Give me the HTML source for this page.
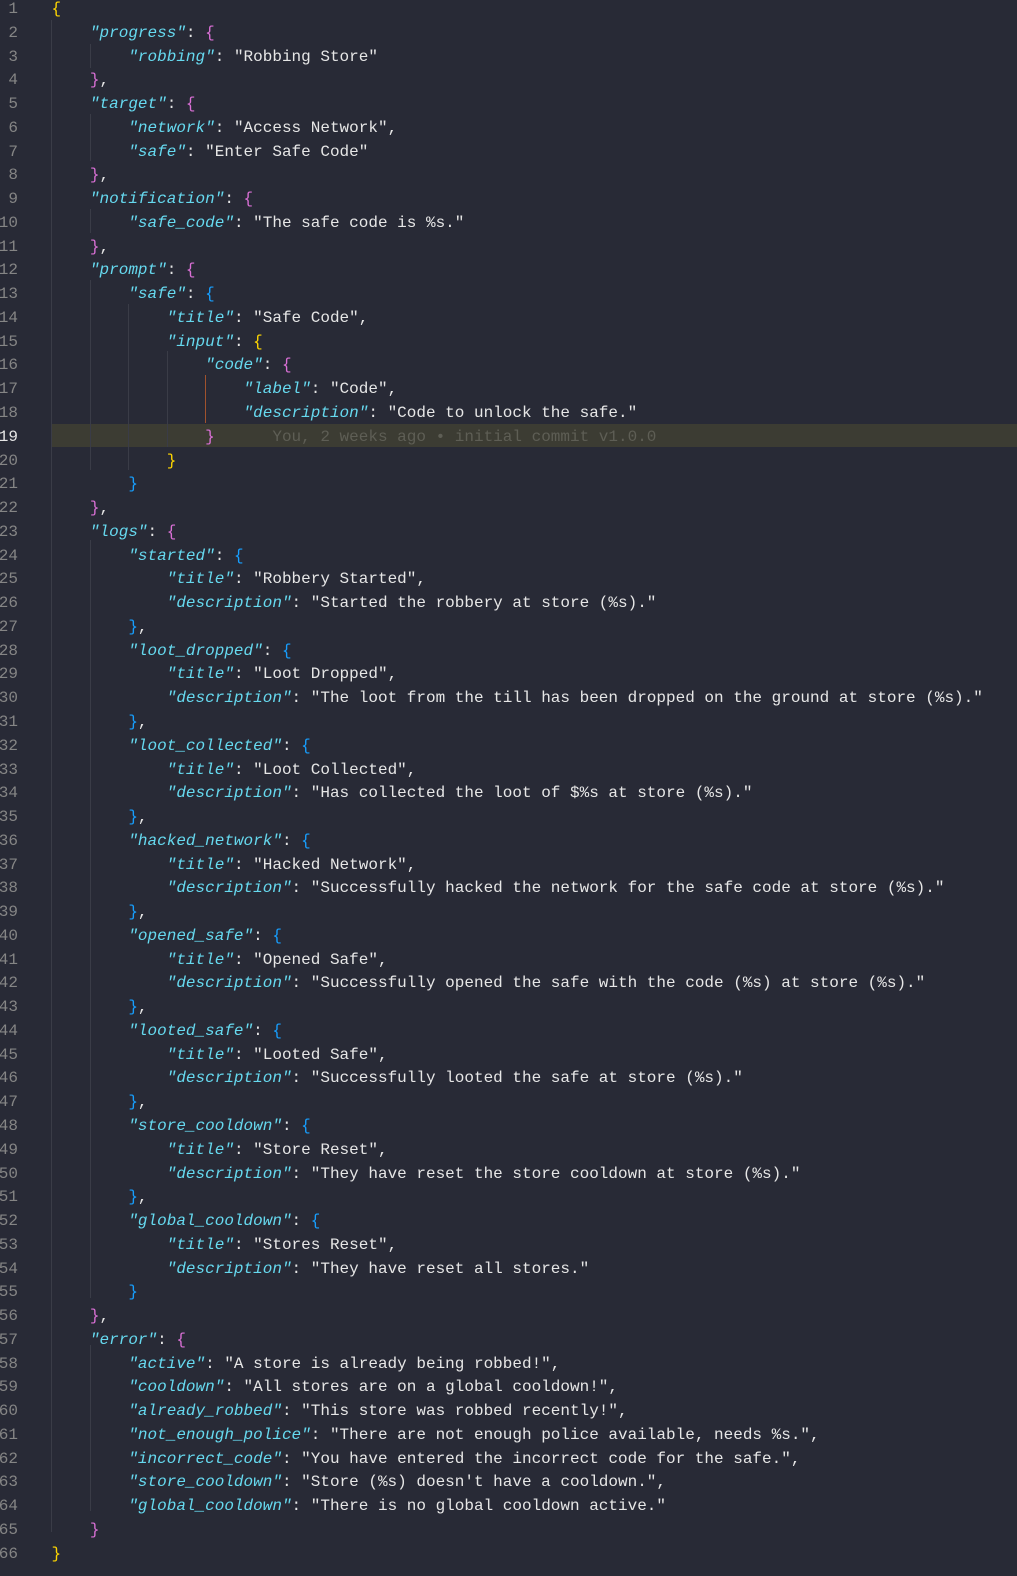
<!DOCTYPE html>
<html><head><meta charset="utf-8"><style>
html,body{margin:0;padding:0;background:#282a36;width:1017px;height:1576px;overflow:hidden}
.ed{position:absolute;left:0;top:-2px;font-family:"Liberation Mono",monospace;font-size:16px;line-height:23.78px;color:#e6e6e6}
.l{position:relative;height:23.78px;white-space:pre}
.n{position:absolute;left:-22px;width:40px;text-align:right;color:#858585}
.c{position:absolute;left:51.5px}
.k{color:#66d9ef;font-style:italic}
.y{color:#ffd700}.p{color:#da70d6}.b{color:#179fff}
.hl .n{color:#e6e6e6}
.blame{color:#5e5e55}
.g{position:absolute;width:1px;background:#3a3c47}
.hlbar{position:absolute;left:51px;top:424px;width:966px;height:23px;background:#3c3c33}
</style></head><body>
<div class="hlbar"></div>
<div class="g" style="left:51px;top:20px;height:1512px"></div>
<div class="g" style="left:90px;top:44px;height:24px"></div>
<div class="g" style="left:90px;top:114px;height:47px"></div>
<div class="g" style="left:90px;top:209px;height:24px"></div>
<div class="g" style="left:90px;top:280px;height:190px"></div>
<div class="g" style="left:128px;top:304px;height:166px"></div>
<div class="g" style="left:167px;top:351px;height:96px"></div>
<div class="g" style="left:205px;top:375px;height:48px;background:#a0522d"></div>
<div class="g" style="left:90px;top:540px;height:758px"></div>
<div class="g" style="left:90px;top:1345px;height:166px"></div>
<div class="ed">
<div class="l"><span class="n">1</span><span class="c"><span class="y">{</span></span></div>
<div class="l"><span class="n">2</span><span class="c">    <span class="k">"progress"</span>: <span class="p">{</span></span></div>
<div class="l"><span class="n">3</span><span class="c">        <span class="k">"robbing"</span>: "Robbing Store"</span></div>
<div class="l"><span class="n">4</span><span class="c">    <span class="p">}</span>,</span></div>
<div class="l"><span class="n">5</span><span class="c">    <span class="k">"target"</span>: <span class="p">{</span></span></div>
<div class="l"><span class="n">6</span><span class="c">        <span class="k">"network"</span>: "Access Network",</span></div>
<div class="l"><span class="n">7</span><span class="c">        <span class="k">"safe"</span>: "Enter Safe Code"</span></div>
<div class="l"><span class="n">8</span><span class="c">    <span class="p">}</span>,</span></div>
<div class="l"><span class="n">9</span><span class="c">    <span class="k">"notification"</span>: <span class="p">{</span></span></div>
<div class="l"><span class="n">10</span><span class="c">        <span class="k">"safe_code"</span>: "The safe code is %s."</span></div>
<div class="l"><span class="n">11</span><span class="c">    <span class="p">}</span>,</span></div>
<div class="l"><span class="n">12</span><span class="c">    <span class="k">"prompt"</span>: <span class="p">{</span></span></div>
<div class="l"><span class="n">13</span><span class="c">        <span class="k">"safe"</span>: <span class="b">{</span></span></div>
<div class="l"><span class="n">14</span><span class="c">            <span class="k">"title"</span>: "Safe Code",</span></div>
<div class="l"><span class="n">15</span><span class="c">            <span class="k">"input"</span>: <span class="y">{</span></span></div>
<div class="l"><span class="n">16</span><span class="c">                <span class="k">"code"</span>: <span class="p">{</span></span></div>
<div class="l"><span class="n">17</span><span class="c">                    <span class="k">"label"</span>: "Code",</span></div>
<div class="l"><span class="n">18</span><span class="c">                    <span class="k">"description"</span>: "Code to unlock the safe."</span></div>
<div class="l hl"><span class="n">19</span><span class="c">                <span class="p">}</span>      <span class="blame">You, 2 weeks ago • initial commit v1.0.0</span></span></div>
<div class="l"><span class="n">20</span><span class="c">            <span class="y">}</span></span></div>
<div class="l"><span class="n">21</span><span class="c">        <span class="b">}</span></span></div>
<div class="l"><span class="n">22</span><span class="c">    <span class="p">}</span>,</span></div>
<div class="l"><span class="n">23</span><span class="c">    <span class="k">"logs"</span>: <span class="p">{</span></span></div>
<div class="l"><span class="n">24</span><span class="c">        <span class="k">"started"</span>: <span class="b">{</span></span></div>
<div class="l"><span class="n">25</span><span class="c">            <span class="k">"title"</span>: "Robbery Started",</span></div>
<div class="l"><span class="n">26</span><span class="c">            <span class="k">"description"</span>: "Started the robbery at store (%s)."</span></div>
<div class="l"><span class="n">27</span><span class="c">        <span class="b">}</span>,</span></div>
<div class="l"><span class="n">28</span><span class="c">        <span class="k">"loot_dropped"</span>: <span class="b">{</span></span></div>
<div class="l"><span class="n">29</span><span class="c">            <span class="k">"title"</span>: "Loot Dropped",</span></div>
<div class="l"><span class="n">30</span><span class="c">            <span class="k">"description"</span>: "The loot from the till has been dropped on the ground at store (%s)."</span></div>
<div class="l"><span class="n">31</span><span class="c">        <span class="b">}</span>,</span></div>
<div class="l"><span class="n">32</span><span class="c">        <span class="k">"loot_collected"</span>: <span class="b">{</span></span></div>
<div class="l"><span class="n">33</span><span class="c">            <span class="k">"title"</span>: "Loot Collected",</span></div>
<div class="l"><span class="n">34</span><span class="c">            <span class="k">"description"</span>: "Has collected the loot of $%s at store (%s)."</span></div>
<div class="l"><span class="n">35</span><span class="c">        <span class="b">}</span>,</span></div>
<div class="l"><span class="n">36</span><span class="c">        <span class="k">"hacked_network"</span>: <span class="b">{</span></span></div>
<div class="l"><span class="n">37</span><span class="c">            <span class="k">"title"</span>: "Hacked Network",</span></div>
<div class="l"><span class="n">38</span><span class="c">            <span class="k">"description"</span>: "Successfully hacked the network for the safe code at store (%s)."</span></div>
<div class="l"><span class="n">39</span><span class="c">        <span class="b">}</span>,</span></div>
<div class="l"><span class="n">40</span><span class="c">        <span class="k">"opened_safe"</span>: <span class="b">{</span></span></div>
<div class="l"><span class="n">41</span><span class="c">            <span class="k">"title"</span>: "Opened Safe",</span></div>
<div class="l"><span class="n">42</span><span class="c">            <span class="k">"description"</span>: "Successfully opened the safe with the code (%s) at store (%s)."</span></div>
<div class="l"><span class="n">43</span><span class="c">        <span class="b">}</span>,</span></div>
<div class="l"><span class="n">44</span><span class="c">        <span class="k">"looted_safe"</span>: <span class="b">{</span></span></div>
<div class="l"><span class="n">45</span><span class="c">            <span class="k">"title"</span>: "Looted Safe",</span></div>
<div class="l"><span class="n">46</span><span class="c">            <span class="k">"description"</span>: "Successfully looted the safe at store (%s)."</span></div>
<div class="l"><span class="n">47</span><span class="c">        <span class="b">}</span>,</span></div>
<div class="l"><span class="n">48</span><span class="c">        <span class="k">"store_cooldown"</span>: <span class="b">{</span></span></div>
<div class="l"><span class="n">49</span><span class="c">            <span class="k">"title"</span>: "Store Reset",</span></div>
<div class="l"><span class="n">50</span><span class="c">            <span class="k">"description"</span>: "They have reset the store cooldown at store (%s)."</span></div>
<div class="l"><span class="n">51</span><span class="c">        <span class="b">}</span>,</span></div>
<div class="l"><span class="n">52</span><span class="c">        <span class="k">"global_cooldown"</span>: <span class="b">{</span></span></div>
<div class="l"><span class="n">53</span><span class="c">            <span class="k">"title"</span>: "Stores Reset",</span></div>
<div class="l"><span class="n">54</span><span class="c">            <span class="k">"description"</span>: "They have reset all stores."</span></div>
<div class="l"><span class="n">55</span><span class="c">        <span class="b">}</span></span></div>
<div class="l"><span class="n">56</span><span class="c">    <span class="p">}</span>,</span></div>
<div class="l"><span class="n">57</span><span class="c">    <span class="k">"error"</span>: <span class="p">{</span></span></div>
<div class="l"><span class="n">58</span><span class="c">        <span class="k">"active"</span>: "A store is already being robbed!",</span></div>
<div class="l"><span class="n">59</span><span class="c">        <span class="k">"cooldown"</span>: "All stores are on a global cooldown!",</span></div>
<div class="l"><span class="n">60</span><span class="c">        <span class="k">"already_robbed"</span>: "This store was robbed recently!",</span></div>
<div class="l"><span class="n">61</span><span class="c">        <span class="k">"not_enough_police"</span>: "There are not enough police available, needs %s.",</span></div>
<div class="l"><span class="n">62</span><span class="c">        <span class="k">"incorrect_code"</span>: "You have entered the incorrect code for the safe.",</span></div>
<div class="l"><span class="n">63</span><span class="c">        <span class="k">"store_cooldown"</span>: "Store (%s) doesn't have a cooldown.",</span></div>
<div class="l"><span class="n">64</span><span class="c">        <span class="k">"global_cooldown"</span>: "There is no global cooldown active."</span></div>
<div class="l"><span class="n">65</span><span class="c">    <span class="p">}</span></span></div>
<div class="l"><span class="n">66</span><span class="c"><span class="y">}</span></span></div>
</div>
</body></html>
